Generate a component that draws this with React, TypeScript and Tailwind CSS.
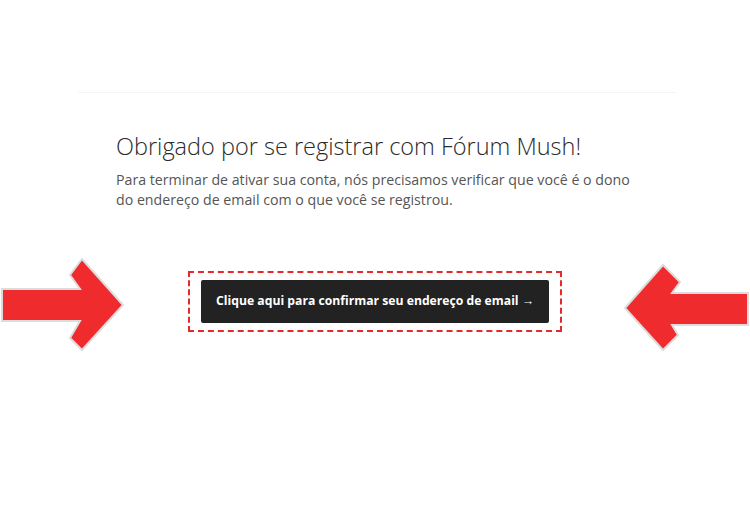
import React from "react";

function RightArrow() {
  return (
    <svg width="130" height="100" viewBox="0 0 130 100" className="absolute left-0 top-[254px]">
      <polygon
        points="2,35 80,35 70,21 82,5 123,51 82,96 70,84 80,67 2,67"
        fill="#ef2b2d"
        stroke="#dcdcdc"
        strokeWidth="2"
        strokeLinejoin="miter"
      />
    </svg>
  );
}

function LeftArrow() {
  return (
    <svg width="130" height="100" viewBox="0 0 130 100" className="absolute left-[620px] top-[254px]">
      <polygon
        points="128,39 52,39 60,28 43,11 5,54 43,96 58,81 52,71 128,71"
        fill="#ef2b2d"
        stroke="#dcdcdc"
        strokeWidth="2"
        strokeLinejoin="miter"
      />
    </svg>
  );
}

export default function App() {
  return (
    <div className="relative w-[750px] h-[507px] bg-white overflow-hidden font-['Open_Sans',sans-serif]">
      <RightArrow />
      <LeftArrow />

      <div className="pt-[92px] pl-[78px]">
        <div className="w-[598px] border-t border-[#f4f4f4]">
          <div className="px-[38px] pt-[37px]">
            <h1 className="text-[23.5px] font-light leading-[32px] text-[#2b2b2b]">
              Obrigado por se registrar com Fórum Mush!
            </h1>
            <p className="mt-[8px] text-[14.2px] leading-[20px] text-[#555]">
              Para terminar de ativar sua conta, nós precisamos verificar que você é o dono do endereço de email com o que você se registrou.
            </p>
          </div>
        </div>
      </div>

      <div className="flex justify-center pt-[61px]">
        <div className="border-2 border-dashed border-[#e32b2b] px-[11px] py-[7px]">
          <button className="h-[43px] w-[348px] rounded-[2px] bg-[#222222] text-[12.2px] font-bold text-white">
            Clique aqui para confirmar seu endereço de email →
          </button>
        </div>
      </div>
    </div>
  );
}
